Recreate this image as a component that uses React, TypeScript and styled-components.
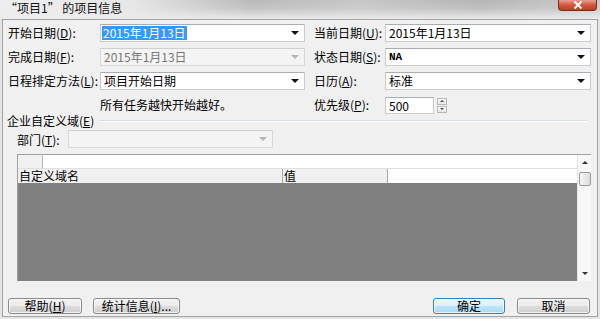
import React from 'react';
import styled, { createGlobalStyle } from 'styled-components';

const Global = createGlobalStyle`
  html, body { margin: 0; padding: 0; background: #e6e6e6; }
  body {
    font-family: "Noto Sans CJK SC", "Noto Sans", sans-serif;
    font-size: 12px;
    color: #000;
  }
  * { box-sizing: border-box; }
`;

const Window = styled.div`
  width: 600px;
  height: 319px;
  display: flex;
  flex-direction: column;
  overflow: hidden;
  background: #e4e4e4;
`;

const TitleBar = styled.div`
  position: relative;
  height: 19px;
  flex: none;
  display: flex;
  align-items: flex-start;
  padding: 1px 0 0 5px;
  background:
    linear-gradient(to bottom, rgba(236,236,236,0) 0%, rgba(236,236,236,0.2) 45%, rgba(236,236,236,0.95) 100%),
    linear-gradient(to right, #eeeeee 0%, #e6e6e6 22%, #b9b9b9 42%, #c6c6c6 60%, #b5b5b5 80%, #c9c9c9 100%);
`;

const TitleText = styled.span`
  font-size: 12px;
  line-height: 14px;
  color: #111;
`;

const CloseButton = styled.div`
  position: absolute;
  top: 0;
  right: 3px;
  width: 39px;
  height: 11px;
  border: 1px solid #7a2a1c;
  border-top: none;
  border-radius: 0 0 4px 4px;
  background: linear-gradient(to bottom, #e8a08f 0%, #d0573e 50%, #c33f22 100%);
  display: flex;
  align-items: center;
  justify-content: center;
`;

const Frame = styled.div`
  flex: 1;
  margin: 0 2px 2px 2px;
  border: 1px solid #a3a3a3;
  background: #f0f0f0;
  display: flex;
  flex-direction: column;
`;

const FormGrid = styled.div`
  margin: 4px 0 0 5px;
  display: grid;
  grid-template-columns: 92px 214px 71px 206px;
  grid-auto-rows: 18px;
  row-gap: 6px;
  align-items: center;
`;

const Label = styled.span`
  white-space: nowrap;
  line-height: 18px;
`;

const Key = styled.u`
  text-underline-offset: 1px;
`;

const ComboBox = styled.div<{ $w: number; $disabled?: boolean }>`
  position: relative;
  width: ${p => p.$w}px;
  height: 18px;
  border: 1px solid ${p => (p.$disabled ? '#d9d9d9' : '#c9cbd0')};
  border-top-color: ${p => (p.$disabled ? '#cfcfcf' : '#a9acb2')};
  background: ${p => (p.$disabled ? '#f4f4f4' : '#ffffff')};
  color: ${p => (p.$disabled ? '#777' : '#000')};
  display: flex;
  align-items: center;
  padding-left: 1px;
  line-height: 14px;
`;

const Arrow = styled.span<{ $disabled?: boolean }>`
  position: absolute;
  right: 5px;
  top: 6px;
  width: 0;
  height: 0;
  border-left: 4px solid transparent;
  border-right: 4px solid transparent;
  border-top: 4px solid ${p => (p.$disabled ? '#b5b5b5' : '#111')};
`;

const Selected = styled.span`
  background: #3399ff;
  color: #fff;
  padding: 0 1px;
`;

const PlainValue = styled.span`
  padding-left: 2px;
`;

const MonoValue = styled.span`
  font-family: "Liberation Mono", monospace;
  font-size: 11px;
  font-weight: bold;
  padding-left: 2px;
`;

const Hint = styled.span`
  white-space: nowrap;
  line-height: 18px;
`;

const SpinWrap = styled.div`
  display: flex;
  align-items: center;
  gap: 3px;
`;

const SpinInput = styled.div`
  width: 49px;
  height: 17px;
  border: 1px solid #c9cbd0;
  border-top-color: #a9acb2;
  background: #fff;
  padding-left: 3px;
  line-height: 15px;
`;

const SpinButtons = styled.div`
  display: flex;
  flex-direction: column;
  gap: 1px;
`;

const SpinBtn = styled.div<{ $up?: boolean }>`
  width: 10px;
  height: 7px;
  border: 1px solid #b8b8b8;
  background: linear-gradient(#fbfbfb, #e6e6e6);
  display: flex;
  align-items: center;
  justify-content: center;
  &::after {
    content: '';
    width: 0;
    height: 0;
    border-left: 2px solid transparent;
    border-right: 2px solid transparent;
    ${p => (p.$up ? 'border-bottom: 2px solid #444;' : 'border-top: 2px solid #444;')}
  }
`;

const GroupHeader = styled.div`
  margin: 1px 10px 0 4px;
  height: 12px;
  display: flex;
  align-items: center;
  gap: 4px;
`;

const GroupTitle = styled.span`
  white-space: nowrap;
  line-height: 12px;
`;

const GroupLine = styled.div`
  flex: 1;
  height: 2px;
  border-top: 1px solid #d5dfe5;
  border-bottom: 1px solid #ffffff;
`;

const DeptRow = styled.div`
  margin: 3px 0 0 14px;
  display: flex;
  align-items: center;
  height: 18px;
`;

const DeptLabel = styled.span`
  width: 51px;
  white-space: nowrap;
`;

const Table = styled.div`
  margin: 6px 0 0 14px;
  width: 574px;
  height: 127px;
  border-top: 1px solid #a0a0a0;
  border-left: 1px solid #a0a0a0;
  background: #fff;
  display: grid;
  grid-template-columns: 1fr 14px;
`;

const TableMain = styled.div`
  display: flex;
  flex-direction: column;
`;

const TopRow = styled.div`
  height: 13px;
  display: flex;
  flex: none;
`;

const CornerCell = styled.div`
  width: 25px;
  background: #f0f0f0;
  border-right: 1px solid #b8b8b8;
`;

const HeaderRow = styled.div`
  height: 15px;
  flex: none;
  display: flex;
  border-top: 1px solid #e0e0e0;
`;

const HeaderCell = styled.div<{ $w: number }>`
  width: ${p => p.$w}px;
  background: #f0f0f0;
  border-right: 1px solid #a8a8a8;
  padding-left: 1px;
  line-height: 14px;
  white-space: nowrap;
`;

const GrayBody = styled.div`
  flex: 1;
  background: #808080;
`;

const ScrollBar = styled.div`
  background: #f7f7f7;
  border-left: 1px solid #e6e6e6;
  display: flex;
  flex-direction: column;
  align-items: center;
`;

const ScrollArrow = styled.div<{ $up?: boolean }>`
  height: 15px;
  width: 100%;
  display: flex;
  align-items: center;
  justify-content: center;
  &::after {
    content: '';
    width: 0;
    height: 0;
    border-left: 3px solid transparent;
    border-right: 3px solid transparent;
    ${p => (p.$up ? 'border-bottom: 3px solid #333;' : 'border-top: 3px solid #333;')}
  }
`;

const Thumb = styled.div`
  width: 12px;
  height: 14px;
  margin-top: 2px;
  border: 1px solid #9a9a9a;
  border-radius: 2px;
  background: linear-gradient(to right, #f6f6f6, #dcdcdc);
`;

const Track = styled.div`
  flex: 1;
`;

const ButtonRow = styled.div`
  margin: 17px 7px 0 5px;
  display: flex;
  align-items: center;
`;

const Button = styled.div<{ $w: number; $default?: boolean }>`
  width: ${p => p.$w}px;
  height: 16px;
  border: 1px solid ${p => (p.$default ? '#3c7fb1' : '#8a8a8a')};
  border-radius: 3px;
  background: ${p =>
    p.$default
      ? 'linear-gradient(to bottom, #eaf6fd 0%, #d9f0fc 50%, #bee6fd 51%, #a7d9f5 100%)'
      : 'linear-gradient(to bottom, #f2f2f2 0%, #ebebeb 50%, #dddddd 51%, #cfcfcf 100%)'};
  box-shadow: inset 0 0 0 1px rgba(255,255,255,0.7);
  display: flex;
  align-items: center;
  justify-content: center;
  line-height: 14px;
  white-space: nowrap;
`;

const Spacer = styled.div<{ $w?: number }>`
  ${p => (p.$w ? `width: ${p.$w}px;` : 'flex: 1;')}
`;

export default function App() {
  return (
    <>
      <Global />
      <Window>
        <TitleBar>
          <TitleText>“项目1” 的项目信息</TitleText>
          <CloseButton>
            <svg width="10" height="8" viewBox="0 0 10 8">
              <path d="M1.5 0.5 L8.5 7.5 M8.5 0.5 L1.5 7.5" stroke="#fff" strokeWidth="2" />
            </svg>
          </CloseButton>
        </TitleBar>
        <Frame>
          <FormGrid>
            <Label>开始日期(<Key>D</Key>):</Label>
            <ComboBox $w={205}>
              <Selected>2015年1月13日</Selected>
              <Arrow />
            </ComboBox>
            <Label>当前日期(<Key>U</Key>):</Label>
            <ComboBox $w={206}>
              <PlainValue>2015年1月13日</PlainValue>
              <Arrow />
            </ComboBox>

            <Label>完成日期(<Key>F</Key>):</Label>
            <ComboBox $w={205} $disabled>
              <PlainValue>2015年1月13日</PlainValue>
              <Arrow $disabled />
            </ComboBox>
            <Label>状态日期(<Key>S</Key>):</Label>
            <ComboBox $w={206}>
              <MonoValue>NA</MonoValue>
              <Arrow />
            </ComboBox>

            <Label>日程排定方法(<Key>L</Key>):</Label>
            <ComboBox $w={205}>
              <PlainValue>项目开始日期</PlainValue>
              <Arrow />
            </ComboBox>
            <Label>日历(<Key>A</Key>):</Label>
            <ComboBox $w={206}>
              <PlainValue>标准</PlainValue>
              <Arrow />
            </ComboBox>

            <span />
            <Hint>所有任务越快开始越好。</Hint>
            <Label>优先级(<Key>P</Key>):</Label>
            <SpinWrap>
              <SpinInput>500</SpinInput>
              <SpinButtons>
                <SpinBtn $up />
                <SpinBtn />
              </SpinButtons>
            </SpinWrap>
          </FormGrid>

          <GroupHeader>
            <GroupTitle>企业自定义域(<Key>E</Key>)</GroupTitle>
            <GroupLine />
          </GroupHeader>

          <DeptRow>
            <DeptLabel>部门(<Key>T</Key>):</DeptLabel>
            <ComboBox $w={205} $disabled>
              <Arrow $disabled />
            </ComboBox>
          </DeptRow>

          <Table>
            <TableMain>
              <TopRow>
                <CornerCell />
              </TopRow>
              <HeaderRow>
                <HeaderCell $w={265}>自定义域名</HeaderCell>
                <HeaderCell $w={105}>值</HeaderCell>
              </HeaderRow>
              <GrayBody />
            </TableMain>
            <ScrollBar>
              <ScrollArrow $up />
              <Thumb />
              <Track />
              <ScrollArrow />
            </ScrollBar>
          </Table>

          <ButtonRow>
            <Button $w={74}>帮助(<Key>H</Key>)</Button>
            <Spacer $w={11} />
            <Button $w={87}>统计信息(<Key>I</Key>)...</Button>
            <Spacer />
            <Button $w={72} $default>确定</Button>
            <Spacer $w={12} />
            <Button $w={73}>取消</Button>
          </ButtonRow>
        </Frame>
      </Window>
    </>
  );
}
